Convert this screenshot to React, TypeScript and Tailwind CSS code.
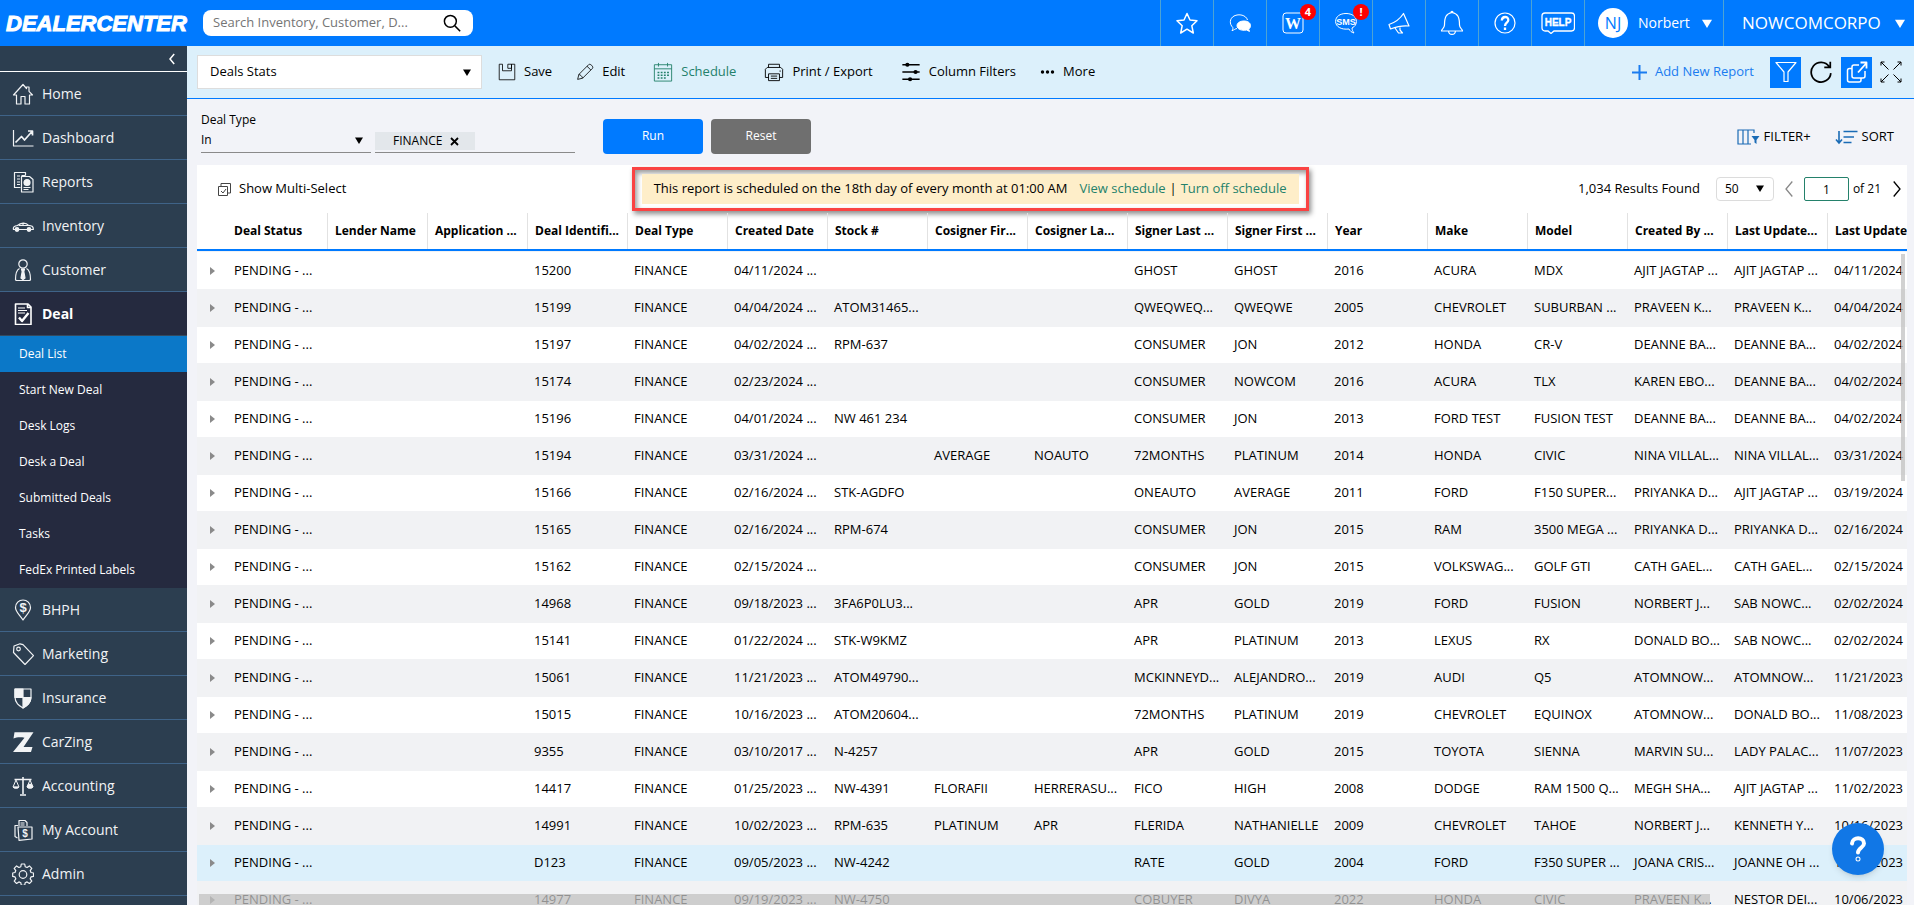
import type { ReactNode } from "react";

const columns = [
    "Deal Status", "Lender Name", "Application ...", "Deal Identifi...", "Deal Type", "Created Date",
    "Stock #", "Cosigner Fir...", "Cosigner La...", "Signer Last ...", "Signer First ...", "Year",
    "Make", "Model", "Created By ...", "Last Update...", "Last Update",
];

// id, created, stock, cosigner first, cosigner last, signer last, signer first, year, make, model, created by, updated by, updated
const deals = [
    ["15200", "04/11/2024 ...", "", "", "", "GHOST", "GHOST", "2016", "ACURA", "MDX", "AJIT JAGTAP ...", "AJIT JAGTAP ...", "04/11/2024"],
    ["15199", "04/04/2024 ...", "ATOM31465...", "", "", "QWEQWEQ...", "QWEQWE", "2005", "CHEVROLET", "SUBURBAN ...", "PRAVEEN K...", "PRAVEEN K...", "04/04/2024"],
    ["15197", "04/02/2024 ...", "RPM-637", "", "", "CONSUMER", "JON", "2012", "HONDA", "CR-V", "DEANNE BA...", "DEANNE BA...", "04/02/2024"],
    ["15174", "02/23/2024 ...", "", "", "", "CONSUMER", "NOWCOM", "2016", "ACURA", "TLX", "KAREN EBO...", "DEANNE BA...", "04/02/2024"],
    ["15196", "04/01/2024 ...", "NW 461 234", "", "", "CONSUMER", "JON", "2013", "FORD TEST", "FUSION TEST", "DEANNE BA...", "DEANNE BA...", "04/02/2024"],
    ["15194", "03/31/2024 ...", "", "AVERAGE", "NOAUTO", "72MONTHS", "PLATINUM", "2014", "HONDA", "CIVIC", "NINA VILLAL...", "NINA VILLAL...", "03/31/2024"],
    ["15166", "02/16/2024 ...", "STK-AGDFO", "", "", "ONEAUTO", "AVERAGE", "2011", "FORD", "F150 SUPER...", "PRIYANKA D...", "AJIT JAGTAP ...", "03/19/2024"],
    ["15165", "02/16/2024 ...", "RPM-674", "", "", "CONSUMER", "JON", "2015", "RAM", "3500 MEGA ...", "PRIYANKA D...", "PRIYANKA D...", "02/16/2024"],
    ["15162", "02/15/2024 ...", "", "", "", "CONSUMER", "JON", "2015", "VOLKSWAG...", "GOLF GTI", "CATH GAEL...", "CATH GAEL...", "02/15/2024"],
    ["14968", "09/18/2023 ...", "3FA6P0LU3...", "", "", "APR", "GOLD", "2019", "FORD", "FUSION", "NORBERT J...", "SAB NOWC...", "02/02/2024"],
    ["15141", "01/22/2024 ...", "STK-W9KMZ", "", "", "APR", "PLATINUM", "2013", "LEXUS", "RX", "DONALD BO...", "SAB NOWC...", "02/02/2024"],
    ["15061", "11/21/2023 ...", "ATOM49790...", "", "", "MCKINNEYD...", "ALEJANDRO...", "2019", "AUDI", "Q5", "ATOMNOW...", "ATOMNOW...", "11/21/2023"],
    ["15015", "10/16/2023 ...", "ATOM20604...", "", "", "72MONTHS", "PLATINUM", "2019", "CHEVROLET", "EQUINOX", "ATOMNOW...", "DONALD BO...", "11/08/2023"],
    ["9355", "03/10/2017 ...", "N-4257", "", "", "APR", "GOLD", "2015", "TOYOTA", "SIENNA", "MARVIN SU...", "LADY PALAC...", "11/07/2023"],
    ["14417", "01/25/2023 ...", "NW-4391", "FLORAFII", "HERRERASU...", "FICO", "HIGH", "2008", "DODGE", "RAM 1500 Q...", "MEGH SHA...", "AJIT JAGTAP ...", "11/02/2023"],
    ["14991", "10/02/2023 ...", "RPM-635", "PLATINUM", "APR", "FLERIDA", "NATHANIELLE", "2009", "CHEVROLET", "TAHOE", "NORBERT J...", "KENNETH Y...", "10/16/2023"],
    ["D123", "09/05/2023 ...", "NW-4242", "", "", "RATE", "GOLD", "2004", "FORD", "F350 SUPER ...", "JOANA CRIS...", "JOANNE OH ...", "10/06/2023"],
    ["14977", "09/19/2023 ...", "NW-4750", "", "", "COBUYER", "DIVYA", "2022", "HONDA", "CIVIC", "PRAVEEN K...", "NESTOR DEI...", "10/06/2023"],
];

const dealLinks = ["Deal List", "Start New Deal", "Desk Logs", "Desk a Deal", "Submitted Deals", "Tasks", "FedEx Printed Labels"];

function Icon({ children, size = 22, sw = 1.2, className = "" }: { children: ReactNode; size?: number; sw?: number; className?: string }) {
    return (
        <svg width={size} height={size} viewBox="0 0 22 22" fill="none" stroke="currentColor" strokeWidth={sw} strokeLinejoin="round" className={`shrink-0 ${className}`} aria-hidden="true">
            {children}
        </svg>
    );
}

function Caret({ size = 8, className = "" }: { size?: number; className?: string }) {
    return (
        <svg width={size} height={size - 1} viewBox="0 0 8 7" fill="currentColor" className={`shrink-0 ${className}`} aria-hidden="true">
            <path d="M0 0.5h8L4 7z" />
        </svg>
    );
}

const menuTop = [
    { label: "Home", icon: <path d="M1.5 12L11 1.5l3.5 4V4h2.5v4.3l3.5 3.7h-3v9h-4.500v-7.500h-4V21H4.500v-9z" /> },
    { label: "Dashboard", icon: <><path d="M1.500 3v16h20" /><path d="M3.500 15.500l6-6 3 3.500 7.500-8.500M16 4h4.500v4.500" strokeWidth="1.700" /></> },
    {
        label: "Reports",
        icon: <>
            <path d="M8.500 16.500H2.500V1.500h11v3M5 5h3M5 8h3M5 11h3M5 13.500h3M9.500 4.500l4 0" />
            <path d="M9.500 5.500h8l3.500 3V21H9.500z" />
            <circle cx="15" cy="11.500" r="3" fill="currentColor" />
            <path d="M11.500 16.500h7M11.500 18.500h5" />
        </>,
    },
    {
        label: "Inventory",
        icon: <>
            <path d="M3 14.500H1.500c-.6-2 .5-3.500 4-4 3-3 8.500-3.500 11-.2 3 .2 5 1.200 4.800 4.200H19M7 14.500h8M7 10.500h9M11 8v2.500" />
            <circle cx="5" cy="14.500" r="1.800" fill="currentColor" />
            <circle cx="17" cy="14.500" r="1.800" fill="currentColor" />
        </>,
    },
    {
        label: "Customer",
        icon: <>
            <circle cx="11" cy="5" r="4.200" />
            <path d="M7.500 9.500C4.500 11 3.500 14 3.500 20.500c0 .7.500 1 1.500 1h12c1 0 1.500-.3 1.500-1 0-6.500-1-9.500-4-11" />
            <path d="M9.500 10h3l-.7 2.500 1.200 6.500-2 1.500-2-1.500 1.200-6.500z" fill="currentColor" />
        </>,
    },
];

const menuBottom = [
    {
        label: "BHPH",
        icon: <>
            <path d="M11 21C8 16 3.500 13 3.500 8.500a7.500 7.500 0 0115 0C18.500 13 14 16 11 21z" />
            <text x="11" y="13" textAnchor="middle" fontSize="13" fontWeight="700" fontFamily="Liberation Sans, sans-serif" fill="currentColor" stroke="none">$</text>
        </>,
    },
    { label: "Marketing", icon: <><path d="M2 3l6-2.200 3 .8 10.500 11-8.500 8.900L1.500 9.500z" /><circle cx="6.500" cy="6" r="1.800" /></> },
    {
        label: "Insurance",
        icon: <>
            <path d="M3 2h16v8c0 6-4 8.500-8 11-4-2.500-8-5-8-11z" />
            <path d="M3 2h8v8.500H3zM11 10.500h8c-.2 5.500-4 8-8 10.500z" fill="currentColor" />
        </>,
    },
    { label: "CarZing", icon: <path d="M2.500 1.200h19l-10 14.800h9l-1.500 5H1l11.500-14.300c-4-.8-8-.6-11 .8z" fill="currentColor" stroke="none" /> },
    {
        label: "Accounting",
        icon: <>
            <path d="M11 2v17M8 20h6M2.500 4.500h17" strokeWidth="1.600" />
            <path d="M4 5L1 12h6zM18 5l-3 7h6z" strokeWidth="1" />
            <path d="M1 12h6c-.5 2-5.500 2-6 0zM15 12h6c-.5 2-5.500 2-6 0zM16.500 9h3l1.500 3h-6z" fill="currentColor" strokeWidth="0.600" />
        </>,
    },
    {
        label: "My Account",
        icon: <>
            <path d="M5.500 19L3 17.500v-11h3M7 7V1.500h6l2 2V7M8.500 4h4M8.500 6h4" />
            <path d="M6 8h14v12l-13 1.300z" />
            <text x="13" y="18" textAnchor="middle" fontSize="10" fontWeight="700" fontFamily="Liberation Sans, sans-serif" fill="currentColor" stroke="none">$</text>
        </>,
    },
    {
        label: "Admin",
        icon: <>
            <path d="M9.300 1h3.400l.5 2.700 1.900.8 2.300-1.600 2.400 2.400-1.600 2.300.8 1.900 2.500.500v3.400l-2.500.5-.8 1.900 1.600 2.300-2.400 2.400-2.300-1.600-1.900.8-.5 2.600H9.300l-.5-2.600-1.900-.8-2.300 1.600-2.400-2.400 1.600-2.300-.8-1.900L.7 13.400V10l2.300-.5.8-1.900-1.600-2.300 2.400-2.400 2.300 1.600 1.900-.8z" />
            <circle cx="11" cy="11.500" r="3.800" />
        </>,
    },
];

function MenuItem({ label, icon }: { label: string; icon: ReactNode }) {
    return (
        <a href="#" className="flex h-11 shrink-0 items-center gap-2 border-b border-[#3f6388] pl-3 text-sm font-medium text-[#f1f3f5]">
            <Icon>{icon}</Icon>
            {label}
        </a>
    );
}

function Sidebar() {
    return (
        <nav className="flex w-[187px] shrink-0 flex-col overflow-hidden bg-[#2c3e50]">
            <button aria-label="Collapse menu" className="flex h-[26px] shrink-0 items-center justify-end border-b border-white pr-3 text-white">
                <svg width="6" height="12" viewBox="0 0 6 12" fill="none" stroke="currentColor" strokeWidth="1.5"><path d="M5.200 1L1 6l4.200 5" /></svg>
            </button>
            {menuTop.map((m) => <MenuItem key={m.label} {...m} />)}
            <a href="#" className="flex h-11 shrink-0 items-center gap-2 border-b border-[#34495e] bg-[#252a3f] pl-3 text-sm font-bold text-white">
                <Icon>
                    <path d="M3.500 1h12.500l3 3v17.500H3.500zM15.500 1v3.500H19" strokeWidth="1.600" />
                    <path d="M6 5h7M6 7.500h9M6 10h7" />
                    <path d="M7 14.500l3 3.500 6.500-8" strokeWidth="2.400" />
                </Icon>
                Deal
            </a>
            <div className="flex shrink-0 flex-col bg-[#252a3f]">
                {dealLinks.map((label, i) => (
                    <a key={label} href="#" className={`flex h-9 items-center pl-[19px] text-xs font-medium text-white ${i === 0 ? "bg-[#0b78c8]" : ""}`}>
                        {label}
                    </a>
                ))}
            </div>
            {menuBottom.map((m) => <MenuItem key={m.label} {...m} />)}
        </nav>
    );
}

function HeaderButton({ label, badge, children }: { label: string; badge?: string; children: ReactNode }) {
    return (
        <button aria-label={label} className="relative flex h-full w-[53px] items-center justify-center border-l border-[#4da3d4]">
            {children}
            {badge && (
                <span className="absolute top-1 right-[3px] flex h-4 w-4 items-center justify-center rounded-full bg-[#ff0000] text-[11px] font-bold">{badge}</span>
            )}
        </button>
    );
}

function Header() {
    return (
        <header className="flex h-[46px] shrink-0 items-center bg-[#007aff] text-white">
            <a href="#" className="w-[203px] pl-[6px] font-['Liberation_Sans',sans-serif] text-[22px] font-bold italic [-webkit-text-stroke:1px_white]">DEALERCENTER</a>
            <form className="flex h-[26px] w-[270px] items-center rounded-lg bg-white px-[10px] text-black">
                <input type="search" aria-label="Search" placeholder="Search Inventory, Customer, D..." className="min-w-0 flex-1 text-[13px] outline-none placeholder:text-[#757575]" />
                <button type="button" aria-label="Search" className="mr-0.5">
                    <Icon size={18} sw={1.8}><circle cx="9" cy="9" r="7.300" /><path d="M14.500 14.500L21 21" /></Icon>
                </button>
            </form>
            <div className="ml-auto flex h-full items-center">
                <HeaderButton label="Favorites">
                    <Icon sw={1.500}><path d="M11 1.500l3 6.500 7 .7-5.200 5 1.500 7.300L11 17.200 4.700 21l1.500-7.300L1 8.700 8 8z" /></Icon>
                </HeaderButton>
                <HeaderButton label="Chat">
                    <Icon sw={1}>
                        <path d="M8 16.500c-1.500.1-3 1.500-5 2.200 1-1.500 1-2.500.8-3.200C.2 12 .5 6.500 5 4c5-2.500 12-1 13.500 4" />
                        <path d="M15 9c4 0 6.500 2 6.500 4.600 0 1.500-.6 2.700-1.800 3.600l.8 2.200-3-1.400C12.500 19 8 17.200 8 13.600 8 11 11 9 15 9z" fill="currentColor" />
                    </Icon>
                </HeaderButton>
                <HeaderButton label="Web" badge="4">
                    <Icon sw={1}>
                        <rect x="1" y="1" width="20" height="20" rx="3" />
                        <text x="11" y="17" textAnchor="middle" fontSize="16" fontWeight="700" fontFamily="Liberation Serif, serif" fill="currentColor" stroke="none">W</text>
                    </Icon>
                </HeaderButton>
                <HeaderButton label="Text messages" badge="!">
                    <Icon sw={1}>
                        <path d="M14 17c-8 1-13.400-2.500-13.400-7.500C.6 4.500 5 1.500 11 1.500s10.400 3 10.400 8c0 3-1.500 5-4.400 6.500.2 2 .8 3.500 2 5-2.500-.6-4-2-5-4z" />
                        <text x="11" y="12.500" textAnchor="middle" fontSize="9" fontWeight="700" fontFamily="Liberation Sans, sans-serif" fill="currentColor" stroke="none">SMS</text>
                    </Icon>
                </HeaderButton>
                <HeaderButton label="Announcements">
                    <Icon>
                        <path d="M15.500 1.500l5.500 12.500c-6-.7-12 .5-18.500 3L1 12.500C7 10.500 12 7 15.500 1.500z" />
                        <path d="M7 16l3.500 5h4l-2.500-3v-2.500" />
                    </Icon>
                </HeaderButton>
                <HeaderButton label="Notifications">
                    <svg width="24" height="26" viewBox="0 0 24 26" fill="none" stroke="currentColor" strokeWidth="1.200">
                        <path d="M1.500 21c-.3-1.500 3-2.500 3-6C4.500 7.500 6 3.500 12 2.500c6 1 7.500 5 7.500 12.500 0 3.500 3.300 4.500 3 6zM8.500 21c.5 4.500 6.500 4.500 7 0M11 2.500c0-1.500 2-1.500 2 0" />
                    </svg>
                </HeaderButton>
                <HeaderButton label="Support">
                    <Icon>
                        <circle cx="11" cy="11" r="10" />
                        <path d="M7.800 8.500C8 3.800 14.300 4 14.300 8c0 2.800-3.300 2.700-3.300 6M11 15.500V18" strokeWidth="2.300" />
                    </Icon>
                </HeaderButton>
                <HeaderButton label="Help">
                    <svg width="34" height="22" viewBox="0 0 34 22" fill="none" stroke="currentColor" strokeWidth="1.300">
                        <path d="M4 1h26.500a3 3 0 013 3v12a3 3 0 01-3 3H13l-3 2.500L7 19H4a3 3 0 01-3-3V4a3 3 0 013-3z" />
                        <text x="17" y="14" textAnchor="middle" fontSize="10" fontWeight="700" fontFamily="Liberation Sans, sans-serif" fill="currentColor" strokeWidth="0.300">HELP</text>
                    </svg>
                </HeaderButton>
                <button className="flex h-full w-[139px] items-center border-l border-[#4da3d4] pl-[13px] text-sm">
                    <span className="mr-[10px] flex h-[30px] w-[30px] items-center justify-center rounded-full bg-white text-base text-[#007aff]">NJ</span>
                    Norbert
                    <Caret size={10} className="ml-3" />
                </button>
                <button className="flex h-full w-[191px] items-center justify-between border-l border-[#4da3d4] pr-[9px] pl-[18px] text-[17px]">
                    NOWCOMCORPO
                    <Caret size={10} />
                </button>
            </div>
        </header>
    );
}

function Toolbar() {
    return (
        <div className="flex h-[53px] shrink-0 items-center border-b border-[#007aff] bg-[#dcf0fb] pr-3 pl-[10px] text-[13px]">
            <div className="relative w-[285px]">
                <select aria-label="Report" className="h-[34px] w-full appearance-none border border-[#dddddd] bg-white pl-3">
                    <option>Deals Stats</option>
                </select>
                <Caret className="pointer-events-none absolute top-[14px] right-[11px]" />
            </div>
            <button className="ml-4 flex items-center gap-2">
                <Icon size={18} sw={1}><path d="M1.500 1.500v19h19v-19h-4v8h-11v-8zM12 1.500h4.500v5H12z" /></Icon>
                Save
            </button>
            <button className="ml-6 flex items-center gap-2">
                <Icon size={18} sw={1}><path d="M2 20l1.500-6L15.500 2c1.800-1.800 6.500 2.700 4.600 4.600l-12 12zM13.500 4l4.700 4.600M3.500 14c2 .5 3.800 2 4.600 4.600" /></Icon>
                Edit
            </button>
            <button className="ml-7 flex items-center gap-2 text-[#24816b]">
                <Icon size={20} sw={1}>
                    <path d="M1.500 3h19v18h-19zM1.500 7.500h19M6 1v4M16 1v4" />
                    <path d="M5 11.500h12.500M5 14.500h12.500M5 17.500h9" strokeDasharray="2 1.500" strokeWidth="1.600" />
                </Icon>
                Schedule
            </button>
            <button className="ml-7 flex items-center gap-2">
                <Icon size={20} sw={1}>
                    <path d="M5 6V2.500h12V6M5 17H1.500V8l2-2h15l2 2v9H17M5 13h12v7.500H5zM7.500 15.500h7M7.500 18h7M17 10h1.500" />
                </Icon>
                Print / Export
            </button>
            <button className="ml-7 flex items-center gap-2">
                <Icon size={20} sw={1.500}>
                    <path d="M1.500 3h19M1.500 11h19M1.500 19h19" />
                    <g fill="currentColor" stroke="none"><circle cx="7" cy="3" r="2.300" /><circle cx="16" cy="11" r="2.300" /><circle cx="10" cy="19" r="2.300" /></g>
                </Icon>
                Column Filters
            </button>
            <button className="ml-6 flex items-center gap-2">
                <svg width="15" height="4" viewBox="0 0 15 4" fill="currentColor" aria-hidden="true"><circle cx="2.500" cy="2" r="1.700" /><circle cx="7.500" cy="2" r="1.700" /><circle cx="12.500" cy="2" r="1.700" /></svg>
                More
            </button>
            <button className="ml-auto flex items-center gap-2 text-[#1a7cf0]">
                <svg width="15" height="15" viewBox="0 0 15 15" stroke="currentColor" strokeWidth="2" aria-hidden="true"><path d="M7.500 0v15M0 7.500h15" /></svg>
                Add New Report
            </button>
            <button aria-label="Toggle filters" className="ml-4 flex h-[31px] w-[31px] items-center justify-center bg-[#007aff] text-white">
                <Icon><path d="M1 1.500h20l-8 9.500v9.500h-4V11z" /></Icon>
            </button>
            <button aria-label="Refresh" className="ml-2">
                <Icon size={24} sw={1.600}><path d="M18.500 6.200A9 9 0 1020 12M19.500 1.500v5.300h-5.500" strokeLinejoin="miter" /></Icon>
            </button>
            <button aria-label="Open in new window" className="ml-2 flex h-[31px] w-[31px] items-center justify-center bg-[#007aff] text-white">
                <Icon sw={1.500}>
                    <path d="M13 4H8c-1.500 0-2 .5-2 2v9c0 1.500.5 2 2 2h9c1.500 0 2-.5 2-2v-5" />
                    <path d="M6 7.500H3.500c-1.500 0-2 .5-2 2V19c0 1.500.5 2 2 2H13c1.500 0 2-.5 2-2v-2" />
                    <path d="M12 11.500L20.500 2M14.500 1.500h6v6" strokeWidth="1.800" />
                </Icon>
            </button>
            <button aria-label="Full screen" className="ml-2">
                <Icon sw={1}><path d="M1 4.500V1h3.500M1 1l7.500 7.500M17.500 1H21v3.500M21 1l-7.500 7.500M1 17.500V21h3.500M1 21l7.500-7.500M17.500 21H21v-3.500M21 21l-7.500-7.500" /></Icon>
            </button>
        </div>
    );
}

function Filters() {
    return (
        <div className="flex h-[66px] shrink-0 items-center px-[14px] text-[13px]">
            <div className="flex w-[374px] flex-wrap gap-x-1">
                <label htmlFor="dealType" className="w-full text-xs leading-[18px]">Deal Type</label>
                <div className="relative w-[170px]">
                    <select id="dealType" className="h-6 w-full appearance-none border-b border-[#8a8a8a] pb-0.5 text-xs">
                        <option>In</option>
                    </select>
                    <Caret className="pointer-events-none absolute top-2 right-2" />
                </div>
                <div className="flex h-6 w-[200px] items-end border-b border-[#8a8a8a] pb-0.5">
                    <span className="flex h-[18px] w-[100px] items-center bg-[#e3e7eb] pl-[18px] text-xs">
                        FINANCE
                        <button aria-label="Remove FINANCE" className="ml-2">
                            <svg width="9" height="9" viewBox="0 0 9 9" stroke="currentColor" strokeWidth="1.800"><path d="M1 1l7 7M8 1L1 8" /></svg>
                        </button>
                    </span>
                </div>
            </div>
            <button className="mt-2 ml-7 h-[35px] w-[100px] rounded bg-[#007aff] text-xs font-medium text-white">Run</button>
            <button className="mt-2 ml-2 h-[35px] w-[100px] rounded bg-[#6f6f6f] text-xs font-medium text-white">Reset</button>
            <button className="mt-[10px] ml-auto flex items-center gap-1">
                <svg width="23" height="16" viewBox="0 0 23 16" fill="none" stroke="#1a6bb5" strokeWidth="1.200">
                    <path d="M17 4V1H1v14h13M6 1v14M11 1v14" />
                    <path d="M14.500 7h8l-3 4v4l-2-1.500V11z" fill="#1a6bb5" stroke="none" />
                </svg>
                FILTER+
            </button>
            <button className="mt-[10px] mr-[6px] ml-6 flex items-center gap-1">
                <svg width="23" height="16" viewBox="0 0 23 16" fill="none" stroke="#1a6bb5" strokeWidth="1.600">
                    <path d="M4 2v12M1 10.500L4 14l3-3.500M8.500 2.500h14M8.500 8h10.500M8.500 13.500h8" />
                </svg>
                SORT
            </button>
        </div>
    );
}

function ResultsBar() {
    return (
        <div className="flex h-12 shrink-0 items-center justify-between pr-[6px] pl-[21px] text-[13px]">
            <button className="flex items-center gap-2 pr-4">
                <svg width="13" height="13" viewBox="0 0 13 13" fill="none" stroke="#444" strokeWidth="1"><path d="M.5 3.500h9v9h-9zM3 3.500v-3h9.500V10h-3M3 8l2 2 3-4" /></svg>
                Show Multi-Select
            </button>
            <div className="border-[3px] border-[#fa4343] px-[7px] py-1 shadow-[2px_3px_5px_rgba(0,0,0,0.45),inset_2px_3px_5px_rgba(0,0,0,0.4)]">
                <div className="flex h-[30px] items-center bg-[#feedc6]/95 px-3">
                    <span className="mr-3">This report is scheduled on the 18th day of every month at 01:00 AM</span>
                    <a href="#" className="text-[#24816b]">View schedule</a>
                    <span className="mx-1">|</span>
                    <a href="#" className="text-[#24816b]">Turn off schedule</a>
                </div>
            </div>
            <div className="flex items-center">
                <span className="mr-4">1,034 Results Found</span>
                <div className="relative">
                    <select aria-label="Rows per page" className="h-6 w-[58px] appearance-none rounded border border-[#dcdcdc] pl-2 text-xs">
                        <option>50</option>
                    </select>
                    <Caret className="pointer-events-none absolute top-2 right-[10px]" />
                </div>
                <button aria-label="Previous page" className="ml-[11px] text-[#888]">
                    <svg width="8" height="16" viewBox="0 0 8 16" fill="none" stroke="currentColor" strokeWidth="1.300"><path d="M7.300 .5L1 8l6.300 7.500" /></svg>
                </button>
                <input aria-label="Page" defaultValue="1" className="mr-1 ml-[11px] h-6 w-[45px] rounded-xs border border-[#24816b] text-center text-xs" />
                <span className="text-xs">of 21</span>
                <button aria-label="Next page" className="ml-3">
                    <svg width="8" height="16" viewBox="0 0 8 16" fill="none" stroke="currentColor" strokeWidth="1.300"><path d="M.7 .5L7 8 .7 15.500" /></svg>
                </button>
            </div>
        </div>
    );
}

function DealsTable() {
    return (
        <div className="relative min-h-0 flex-1 overflow-hidden">
            <table className="w-full table-fixed border-separate border-spacing-0 text-left whitespace-nowrap">
                <colgroup>
                    <col className="w-[30px]" />
                    {columns.map((c, i) => <col key={i} className={i < columns.length - 1 ? "w-[100px]" : ""} />)}
                </colgroup>
                <thead className="text-xs">
                    <tr className="h-[38px]">
                        <th aria-label="Expand" className="border-b-2 border-[#007aff] p-0" />
                        {columns.map((c, i) => (
                            <th key={i} className="border-b-2 border-[#007aff] p-0">
                                <div className={`flex h-9 items-center pl-[7px] font-bold ${i > 0 ? "border-l border-[#e2e2e2]" : ""}`}>{c}</div>
                            </th>
                        ))}
                    </tr>
                </thead>
                <tbody className="text-[13px]">
                    {deals.map((deal, i) => (
                        <tr key={deal[0]} className={`h-[37px] first:h-[38px] ${i === 16 ? "bg-[#dcf0fb]" : i % 2 ? "bg-[#f1f2f4]" : "bg-white"}`}>
                            <td className="border-t border-[#f1f2f4] p-0 pl-[13px]">
                                <button aria-label="Expand row" className="block text-[#8a8a8a]">
                                    <svg width="5" height="8" viewBox="0 0 5 8" fill="currentColor"><path d="M0 0l5 4-5 4z" /></svg>
                                </button>
                            </td>
                            {["PENDING - ...", "", "", deal[0], "FINANCE", ...deal.slice(1)].map((cell, j) => (
                                <td key={j} className="border-t border-[#f1f2f4] p-0 pl-[7px]">{cell}</td>
                            ))}
                        </tr>
                    ))}
                </tbody>
            </table>
            {/* overlay scrollbars */}
            <div className="absolute top-[41px] right-[2px] h-[227px] w-1 bg-[#c1c1c1]/75" />
            <div className="absolute right-[197px] bottom-0 left-[2px] h-[11px] bg-[#c1c1c1]/75" />
        </div>
    );
}

export default function App() {
    return (
        <div className="flex h-screen flex-col overflow-hidden bg-[#f2f3f8] font-['Open_Sans',sans-serif] text-black">
            <Header />
            <div className="flex min-h-0 flex-1">
                <Sidebar />
                <main className="flex min-w-0 flex-1 flex-col">
                    <Toolbar />
                    <Filters />
                    <section className="mr-[7px] ml-[10px] flex min-h-0 flex-1 flex-col bg-white">
                        <ResultsBar />
                        <DealsTable />
                    </section>
                </main>
            </div>
            <button aria-label="Help center" className="fixed right-[30px] bottom-[30px] flex h-[52px] w-[52px] items-center justify-center rounded-full bg-[#1177e6] text-white shadow-md">
                <svg width="18" height="26" viewBox="0 0 18 26" fill="none" stroke="currentColor" strokeWidth="4" strokeLinecap="round">
                    <path d="M3 7.500C3.500 .5 15 .8 15 7.500c0 4-6 4.500-6 9" />
                    <circle cx="9" cy="23" r="0.500" />
                </svg>
            </button>
        </div>
    );
}
